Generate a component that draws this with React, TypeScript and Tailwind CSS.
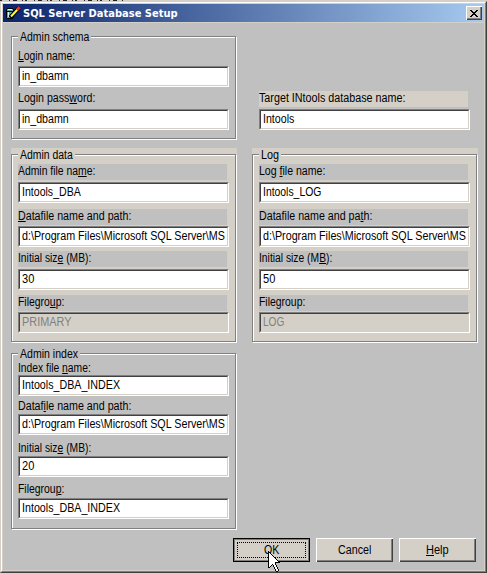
import { useLayoutEffect, useRef, useState } from 'react';

// Text squeezed or stretched to a fixed advance; "&" marks the mnemonic letter.
function Fit({ text, width }: { text: string; width: number }) {
  const ref = useRef<HTMLSpanElement>(null);
  const [scale, setScale] = useState(1);
  useLayoutEffect(() => {
    if (ref.current) setScale(width / ref.current.offsetWidth);
  }, [width]);
  const i = text.indexOf('&');
  return (
    <span ref={ref} className="inline-block origin-left whitespace-pre" style={{ transform: `scaleX(${scale})` }}>
      {i < 0 ? text : (
        <>
          {text.slice(0, i)}
          <span className="underline decoration-1 underline-offset-1">{text[i + 1]}</span>
          {text.slice(i + 2)}
        </>
      )}
    </span>
  );
}

type FieldProps = {
  label: string;
  labelWidth: number;
  value: string;
  valueWidth: number;
  className: string;
  band?: string;
  disabled?: boolean;
};

function Field({ label, labelWidth, value, valueWidth, className, band = '', disabled }: FieldProps) {
  return (
    <div className={`flex w-[211px] flex-col justify-between ${className}`}>
      <div className={`flex h-4 min-h-0 w-[209px] items-start leading-[15px] ${band}`}>
        <Fit text={label} width={labelWidth} />
      </div>
      <div className="relative h-[21px] shrink-0 border border-t-[#808080] border-l-[#808080] border-r-white border-b-white">
        <div className={`flex h-full items-center overflow-hidden border border-t-[#404040] border-l-[#404040] border-r-[#d4d0c8] border-b-[#d4d0c8] pl-[2px] leading-[17px] ${disabled ? 'bg-[#d4d0c8] text-[#808080]' : 'bg-white'}`}>
          <Fit text={value} width={valueWidth} />
        </div>
      </div>
    </div>
  );
}

type GroupProps = { title: string; titleWidth: number; className: string; legend: string; children: React.ReactNode };

function Group({ title, titleWidth, className, legend, children }: GroupProps) {
  return (
    <div className={`relative w-[225px] border border-[#808080] pl-[6px] shadow-[1px_1px_0_#fff,inset_1px_1px_0_#fff] ${className}`}>
      <div className={`absolute -top-[7px] left-[6px] flex h-[15px] pl-[2px] leading-[15px] ${legend}`}>
        <div style={{ width: titleWidth + 2 }}>
          <Fit text={title} width={titleWidth} />
        </div>
      </div>
      {children}
    </div>
  );
}

function PushButton({ text, width, focused }: { text: string; width: number; focused?: boolean }) {
  return (
    <div className={`relative flex h-6 w-[77px] justify-center bg-[#d4d0c8] ${focused ? 'border border-black leading-[23px] shadow-[inset_1px_1px_0_#808080,inset_-1px_-1px_0_#808080]' : 'leading-[24px] shadow-[inset_1px_1px_0_#fff,inset_-1px_-1px_0_#404040,inset_-2px_-2px_0_#808080]'}`}>
      {focused && <div className="absolute inset-[3px] border border-dotted border-black" />}
      <div className="flex justify-start" style={{ width }}>
        <Fit text={text} width={width} />
      </div>
    </div>
  );
}

const path = 'd:\\Program Files\\Microsoft SQL Server\\MS';

export default function App() {
  const gray = 'bg-[#c0c0c0]';
  return (
    <div className="relative h-[573px] w-[487px] overflow-hidden bg-[#d4d0c8] font-['Liberation_Sans',Arial,sans-serif] text-[12px] text-black">
      <svg className="block h-px w-[487px]" viewBox="0 0 487 1" shapeRendering="crispEdges">
        <path d="M0 .5H123" stroke="#222" strokeDasharray="2 7 1 3 4 5 1 2" />
      </svg>
      <div className="h-[572px] border border-t-[#d4d0c8] border-l-[#d4d0c8] border-r-[#404040] border-b-[#404040]">
        <div className="h-full border border-t-white border-l-white border-r-[#808080] border-b-[#808080]">
          <div className="flex h-full flex-col border border-[#d4d0c8] bg-[#c0c0c0]">
            <div className="flex h-[18px] shrink-0 items-center bg-[linear-gradient(to_right,#0a246a,#a6caf0)] pl-[2px] pr-[2px]">
              <svg width="16" height="16" viewBox="0 0 16 16">
                <path d="M1 4h1V3h6v1h1v9H8v1H2v-1H1z" fill="#000" />
                <path d="M2 4h6v2H2zM2 7h6v6H2z" fill="#58a8a8" />
                <path d="M3 4h4v1H3zM3 7h1v5H3z" fill="#d8ffff" />
                <path d="M5 12.500L14 3" stroke="#000" strokeWidth="4" />
                <path d="M6 11.500L12.500 4.500" stroke="#ffff28" strokeWidth="2" />
                <path d="M12 5L14.500 2.200" stroke="#f03030" strokeWidth="2.800" />
              </svg>
              <div className="ml-[2px] grow pt-px font-['DejaVu_Sans',sans-serif] text-[11px] font-bold leading-[17px] text-white">
                <Fit text="SQL Server Database Setup" width={155} />
              </div>
              <div className="flex h-[14px] w-4 items-center justify-center bg-[#d4d0c8] shadow-[inset_1px_1px_0_#fff,inset_-1px_-1px_0_#404040,inset_-2px_-2px_0_#808080]">
                <svg width="8" height="7" viewBox="0 0 8 7" shapeRendering="crispEdges">
                  <path d="M0 0h2v1h1v1h2V1h1V0h2v1H7v1H6v1H5v1h1v1h1v1h1v1H6V6H5V5H3v1H2v1H0V6h1V5h1V4h1V3H2V2H1V1H0z" />
                </svg>
              </div>
            </div>
            <div className="h-px shrink-0 bg-[#d4d0c8]" />
            <div className="flex h-[515px] shrink-0 gap-[15px] pl-2">
              <div className="w-[226px]">
                <div className="h-[125px] pt-[13px]">
                  <Group title="Admin schema" titleWidth={69} className="h-[103px] pt-[12px]" legend={gray}>
                    <Field label="&Login name:" labelWidth={57} value="in_dbamn" valueWidth={47} className="h-[38px]" />
                    <Field label="Login pass&word:" labelWidth={77} value="in_dbamn" valueWidth={47} className="mt-[4px] h-[39px]" />
                  </Group>
                </div>
                <div className="h-[195px] bg-[#d4d0c8] pt-[6px]">
                  <Group title="Admin data" titleWidth={53} className="h-[188px] pt-[9px]" legend="bg-[#d4d0c8]">
                    <Field label="Admin file na&me:" labelWidth={77} value="Intools_DBA" valueWidth={59} className="h-[39px]" band={gray} />
                    <Field label="&Datafile name and path:" labelWidth={113} value={path} valueWidth={203} className="mt-[6px] h-[38px]" band={gray} />
                    <Field label="Initial siz&e (MB):" labelWidth={73} value="30" valueWidth={12} className="mt-[4px] h-[39px]" band={gray} />
                    <Field label="Filegro&up:" labelWidth={46} value="PRIMARY" valueWidth={49} className="mt-[5px] h-[38px]" band={gray} disabled />
                  </Group>
                </div>
                <div className="pt-[10px]">
                  <Group title="Admin index" titleWidth={58} className="h-[176px] pt-[7px]" legend={gray}>
                    <Field label="Index file &name:" labelWidth={73} value="Intools_DBA_INDEX" valueWidth={98} className="h-[35px]" />
                    <Field label="Dataf&ile name and path:" labelWidth={113} value={path} valueWidth={203} className="mt-[3px] h-[36px]" />
                    <Field label="Initial siz&e (MB):" labelWidth={73} value="20" valueWidth={12} className="mt-[6px] h-[36px]" />
                    <Field label="Filegrou&p:" labelWidth={46} value="Intools_DBA_INDEX" valueWidth={98} className="mt-[5px] h-[37px]" />
                  </Group>
                </div>
              </div>
              <div className="w-[226px]">
                <div className="h-[125px] pt-[68px] pl-[7px]">
                  <Field label="Target INtools database name:" labelWidth={146} value="Intools" valueWidth={31} className="h-[39px]" band="bg-[#d4d0c8]" />
                </div>
                <div className="h-[195px] bg-[#d4d0c8] pt-[6px]">
                  <Group title="Log" titleWidth={18} className="h-[188px] pt-[9px]" legend="bg-[#d4d0c8]">
                    <Field label="Log &file name:" labelWidth={66} value="Intools_LOG" valueWidth={58} className="h-[39px]" band={gray} />
                    <Field label="Datafile name and pa&th:" labelWidth={113} value={path} valueWidth={203} className="mt-[6px] h-[38px]" band={gray} />
                    <Field label="Initial size (M&B):" labelWidth={73} value="50" valueWidth={12} className="mt-[4px] h-[39px]" band={gray} />
                    <Field label="Filegroup:" labelWidth={46} value="LOG" valueWidth={21} className="mt-[5px] h-[38px]" band={gray} disabled />
                  </Group>
                </div>
              </div>
            </div>
            <div className="flex gap-[6px] pl-[230px]">
              <PushButton text="OK" width={15} focused />
              <PushButton text="Cancel" width={33} />
              <PushButton text="&Help" width={23} />
            </div>
          </div>
        </div>
      </div>
      <svg className="absolute left-[268px] top-[551px]" width="12" height="21" viewBox="0 0 12 21" shapeRendering="crispEdges">
        <path d="M0 0h1v1h1v1h1v1h1v1h1v1h1v1h1v1h1v1h1v1h1v1h1v1h1v1H8v2h1v2h1v2h1v2h-1v1H8v-1H7v-2H6v-2H5v-2H4v1H3v1H2v1H0z" fill="#000" />
        <path d="M1 2h1v1h1v1h1v1h1v1h1v1h1v1h1v1h1v1h1v1H7v3h1v2h1v2h1v2H8v-2H7v-2H6v-2H5v-1H4v1H3v1H2v1H1z" fill="#fff" />
      </svg>
    </div>
  );
}
